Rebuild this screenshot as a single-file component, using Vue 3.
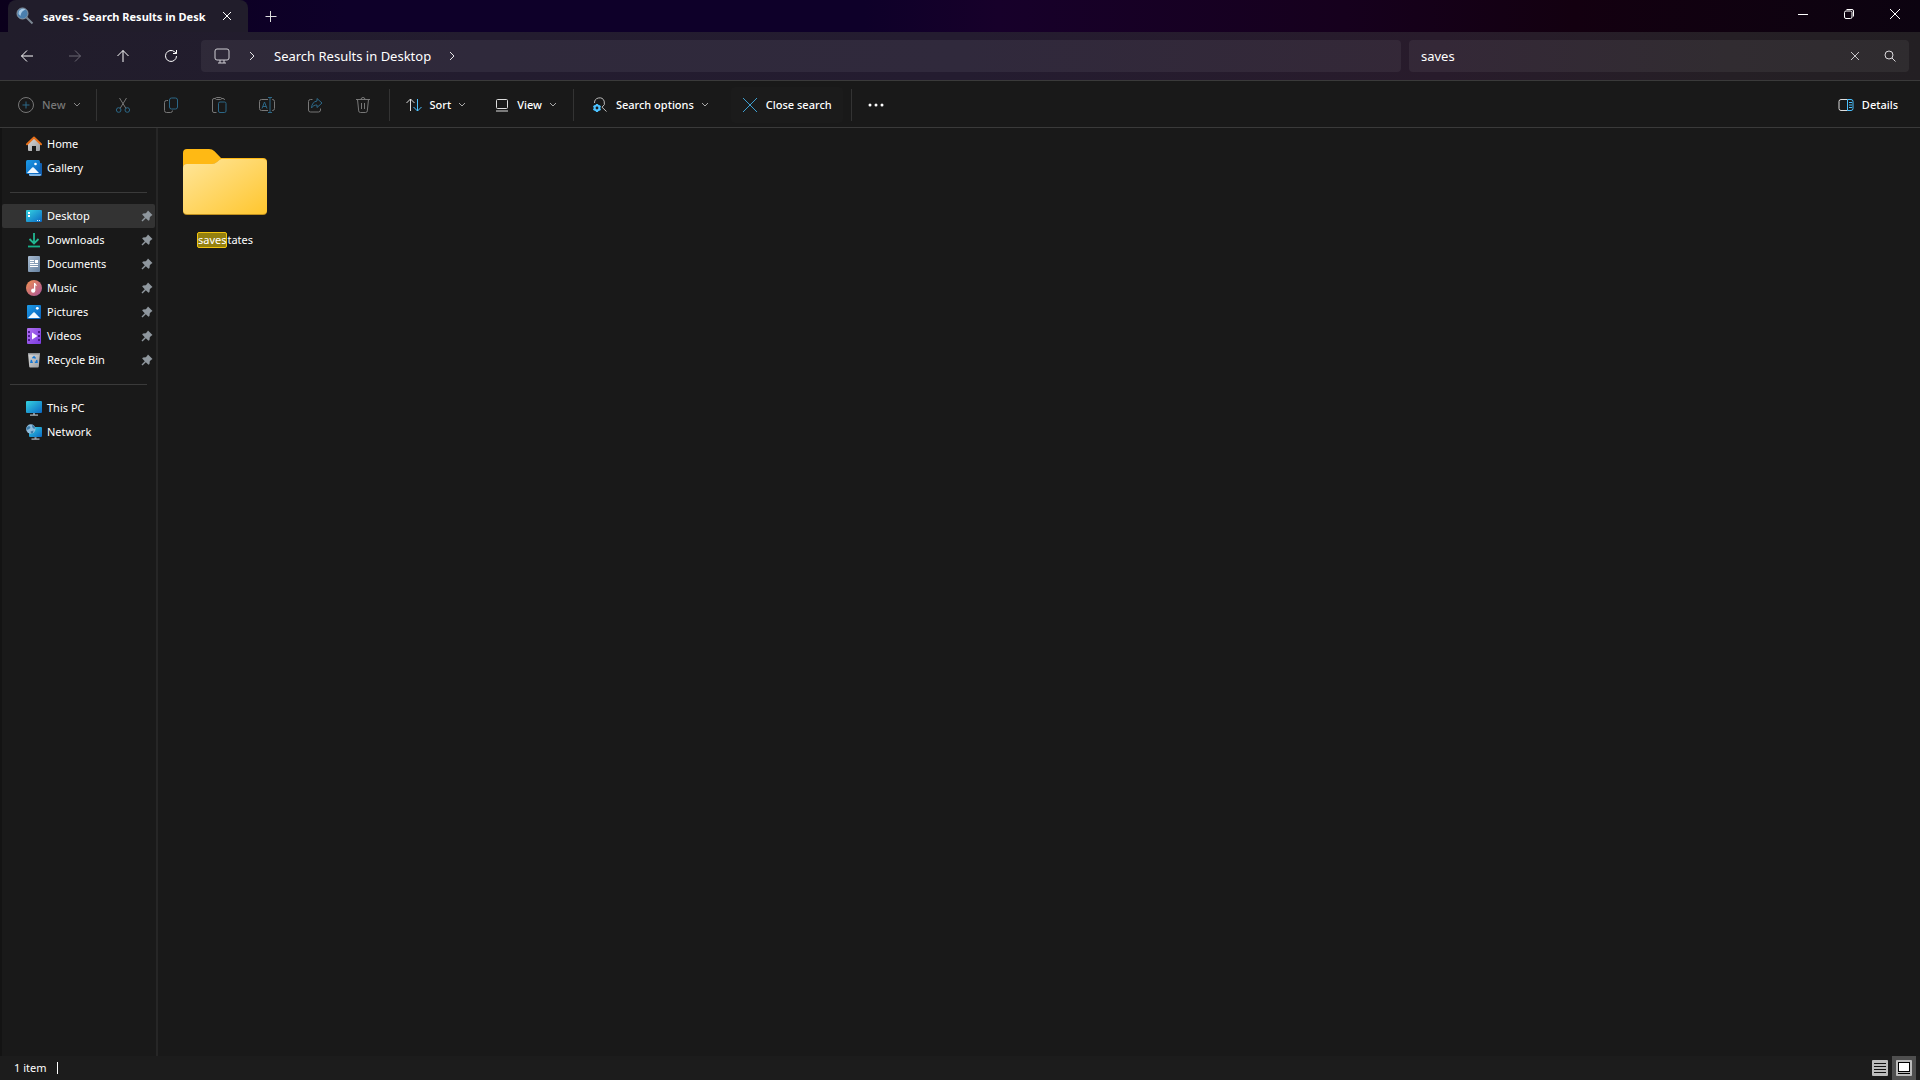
<script setup>
import { ref } from 'vue'

const query = ref('saves')
const selected = ref('Desktop')
const viewMode = ref('icons')

const navGroups = [
  {
    label: 'Start',
    items: [
      { name: 'Home', icon: 'home' },
      { name: 'Gallery', icon: 'gallery' }
    ]
  },
  {
    label: 'Quick access',
    items: [
      { name: 'Desktop', icon: 'desktop', pinned: true },
      { name: 'Downloads', icon: 'downloads', pinned: true },
      { name: 'Documents', icon: 'documents', pinned: true },
      { name: 'Music', icon: 'music', pinned: true },
      { name: 'Pictures', icon: 'pictures', pinned: true },
      { name: 'Videos', icon: 'videos', pinned: true },
      { name: 'Recycle Bin', icon: 'recycle', pinned: true }
    ]
  },
  {
    label: 'Devices',
    items: [
      { name: 'This PC', icon: 'pc' },
      { name: 'Network', icon: 'network' }
    ]
  }
]

const navIcons = {
  home: '<path d="M2 7.500 8 2l6 5.500V14a1 1 0 0 1-1 1h-3v-5H6v5H3a1 1 0 0 1-1-1z" fill="url(#gGrey)"/><path d="M1 8.200 8 1.600l7 6.600" fill="none" stroke="#e8701a" stroke-width="2" stroke-linecap="round" stroke-linejoin="round"/>',
  gallery: '<path d="M3 13h11V3h1a1 1 0 0 1 1 1v10.500a1.500 1.500 0 0 1-1.500 1.500H4a1 1 0 0 1-1-1z" fill="#1260b0"/><path d="M3 14h12v1l-1 1H4l-1-1z" fill="#7db4e6"/><rect width="14" height="14" rx="1.500" fill="url(#gBlue)"/><path d="M1 13 6.200 7.600a1 1 0 0 1 1.500 0L13 13z" fill="#f2f9ff"/><circle cx="9.500" cy="4" r="1.300" fill="#fff"/>',
  desktop: '<rect y="2" width="16" height="12" rx="1" fill="url(#gTeal)"/><path d="M2 4h2v2H2zM2 7h2v2H2z" fill="#fff"/><path d="M11 12h1v1h-1zM13 12h1v1h-1z" fill="#d6f2ff"/>',
  downloads: '<path d="M8 1v10M3.500 7 8 11.500 12.500 7" fill="none" stroke="#22b892" stroke-width="1.800"/><path d="M2 14.500h12" stroke="#17b08a" stroke-width="1.800"/>',
  documents: '<rect x="2" width="12" height="16" rx="1" fill="url(#gSlate)"/><path d="M4 4.500h4M4 6.500h4M4 8.500h8M4 10.500h8" stroke="#fff" stroke-width="1"/><path d="M9 4h3v3H9z" fill="#fff"/>',
  music: '<circle cx="8" cy="8" r="8" fill="url(#gMusic)"/><path d="M8 3h1.200c.2 1.400 1.800 1.600 1.800 3.200-.6-.6-1.200-.7-1.700-.7V10.500H8z" fill="#fff"/><circle cx="7.200" cy="10.700" r="2.100" fill="#fff"/>',
  pictures: '<rect x="1" y="1" width="14" height="14" rx="1" fill="url(#gBlue)"/><path d="M2 14 7.300 8.600a1 1 0 0 1 1.400 0L14 14z" fill="#f2f9ff"/><circle cx="11.300" cy="4.300" r="1.400" fill="#fff"/>',
  videos: '<rect x="1" width="14" height="16" rx="1" fill="url(#gPurple)"/><path d="M2 3h2v2H2zM2 7h2v2H2zM2 11h2v2H2zM12 3h2v2h-2zM12 7h2v2h-2zM12 11h2v2h-2z" fill="#4d1c8c"/><path d="M6 4.500 11.500 8 6 11.500z" fill="#fff"/>',
  recycle: '<path d="M2 1h12l-1.200 13.500a1 1 0 0 1-1 1H4.200a1 1 0 0 1-1-1z" fill="url(#gGrey)"/><path d="M2 1h12v1.500H2z" fill="#8e9296"/><path d="M6.500 6.200 8 4.800l1.500 1.800M10.600 8l.4 2.200H8.800M6.800 10.200H5L5.500 7.800" fill="none" stroke="#1477d4" stroke-width="1.500"/>',
  pc: '<rect y="1" width="16" height="12" rx="1" fill="url(#gTeal)"/><path d="M7 13h2v2H7z" fill="#7e8b96"/><path d="M4 14.500h8v1.200H4z" fill="#b5bfc8"/>',
  network: '<rect x="3" y="3" width="13" height="10" rx="1" fill="url(#gTeal)"/><path d="M8.500 13h2v2h-2z" fill="#7e8b96"/><path d="M5.500 14.500h8v1.200h-8z" fill="#b5bfc8"/><circle cx="4.800" cy="5" r="4.700" fill="#8fbcdc"/><path d="M2 2.500c2-1 3 .5 2 1.800S1.500 6 .6 5.500C.5 4 1.200 3 2 2.500zM6 1c1.800.4 2.800 1.800 3.200 3.500C7.500 5 6 4.200 6 1zM4.500 7.500 7.500 6.500 7 9 5 9.500z" fill="#3b7caa"/>'
}

const fileActions = [
  { name: 'Cut', svg: '<path d="M4.500 1 11 11.500M11.500 1 5 11.500" stroke="#777"/><circle cx="3.700" cy="13" r="2.300" stroke="#2c6888"/><circle cx="12.300" cy="13" r="2.300" stroke="#2c6888"/>' },
  { name: 'Copy', svg: '<path d="M5 3.500H3.500a2 2 0 0 0-2 2v8a2 2 0 0 0 2 2h4a2 2 0 0 0 2-2" stroke="#777"/><rect x="6.500" y="1" width="8" height="11" rx="2" stroke="#2c6888"/>' },
  { name: 'Paste', svg: '<path d="M4.500 1.500H3a1.500 1.500 0 0 0-1.500 1.500v11A1.500 1.500 0 0 0 3 15.500h2.500M10.500 1.500H12a1.500 1.500 0 0 1 1.500 1.500" stroke="#777"/><rect x="4.500" y=".5" width="6" height="2" rx="1" stroke="#777"/><rect x="7.500" y="5" width="7.500" height="10.500" rx="1.500" stroke="#2c6888"/>' },
  { name: 'Rename', svg: '<path d="M9 2.500H2.500a2 2 0 0 0-2 2v7a2 2 0 0 0 2 2H9M13 2.500h.5a2 2 0 0 1 2 2v7a2 2 0 0 1-2 2H13" stroke="#777"/><path d="M3 11.500 5.500 5 8 11.500M4 9.500h3M11 .5v15M9 .5h4M9 15.500h4" stroke="#2c6888"/>' },
  { name: 'Share', svg: '<path d="M5.500 2.500h-2a2 2 0 0 0-2 2v8.500a2 2 0 0 0 2 2h8a2 2 0 0 0 2-2v-1.500" stroke="#777"/><path d="M10 1.500 15 6l-5 4.500V8C7.500 8 6 8.700 4.500 11c.2-4 2.200-6.500 5.500-7z" stroke="#2c6888" stroke-linejoin="round"/>' },
  { name: 'Delete', svg: '<path d="M1 2.500h14M6 2.500a2 2 0 0 1 4 0M2.500 2.500l1.200 11.400a1.700 1.700 0 0 0 1.700 1.600h5.200a1.700 1.700 0 0 0 1.700-1.600l1.200-11.400M6.500 6v6M9.500 6v6" stroke="#777"/>' }
]

const clearQuery = () => {
  query.value = ''
}
</script>

<template>
  <div class="explorer">
    <svg class="defs" aria-hidden="true">
      <defs>
        <linearGradient id="gGrey" x1="0" y1="0" x2="1" y2="1"><stop offset="0" stop-color="#d9d9d9" /><stop offset="1" stop-color="#9a9da0" /></linearGradient>
        <linearGradient id="gBlue" x1="0" y1="0" x2="1" y2="1"><stop offset="0" stop-color="#1c9be8" /><stop offset="1" stop-color="#0a5fb8" /></linearGradient>
        <linearGradient id="gTeal" x1="0" y1="0" x2="1" y2="1"><stop offset="0" stop-color="#35d3e0" /><stop offset="1" stop-color="#0b68c4" /></linearGradient>
        <linearGradient id="gSlate" x1="0" y1="0" x2="1" y2="1"><stop offset="0" stop-color="#a9bcd0" /><stop offset="1" stop-color="#64809f" /></linearGradient>
        <linearGradient id="gMusic" x1="0" y1="0" x2="1" y2="1"><stop offset="0" stop-color="#f09050" /><stop offset="1" stop-color="#a9539a" /></linearGradient>
        <linearGradient id="gPurple" x1="0" y1="0" x2="1" y2="1"><stop offset="0" stop-color="#b070f0" /><stop offset="1" stop-color="#7a3be0" /></linearGradient>
      </defs>
    </svg>

    <header class="titlebar">
      <div class="tab">
        <svg class="tab-icon" width="18" height="18" viewBox="0 0 18 18">
          <path d="M10.500 10.500 16.500 16.500" stroke="#7c8894" stroke-width="2" />
          <circle cx="6.500" cy="6.500" r="5.500" fill="#4a7fae" stroke="#8d9aa6" />
          <path d="M2.500 7a4.500 4.500 0 0 1 7-4.300C7 3.500 5 5 4.500 9z" fill="#a9cbe6" />
        </svg>
        <span class="tab-title">saves - Search Results in Desk</span>
        <button class="tab-close" aria-label="Close tab">
          <svg width="10" height="10" viewBox="0 0 10 10"><path d="M1 1l8 8M9 1 1 9" stroke="#fff" /></svg>
        </button>
      </div>
      <button class="new-tab" aria-label="New tab">
        <svg width="12" height="12" viewBox="0 0 12 12"><path d="M.5 6.500h11M5.500 1v11" stroke="#ddd" /></svg>
      </button>
      <div class="window-controls">
        <button aria-label="Minimize">
          <svg width="12" height="12" viewBox="0 0 12 12"><path d="M1 6.500h10" stroke="#fff" /></svg>
        </button>
        <button aria-label="Restore">
          <svg width="12" height="12" viewBox="0 0 12 12" fill="none" stroke="#fff"><rect x="1.500" y="3" width="7.500" height="7.500" rx="1.500" /><path d="M3.500 1.500H9A1.500 1.500 0 0 1 10.500 3v5.500" /></svg>
        </button>
        <button aria-label="Close">
          <svg width="12" height="12" viewBox="0 0 12 12"><path d="M1 1l10 10M11 1 1 11" stroke="#fff" /></svg>
        </button>
      </div>
    </header>

    <div class="addressbar">
      <div class="history">
        <button aria-label="Back">
          <svg width="14" height="14" viewBox="0 0 14 14" fill="none" stroke="#fff"><path d="M13 7H1.500M7 1.500 1.500 7 7 12.500" /></svg>
        </button>
        <button aria-label="Forward" disabled>
          <svg width="14" height="14" viewBox="0 0 14 14" fill="none" stroke="#6b6873"><path d="M1 7h11.500M7 1.500 12.500 7 7 12.500" /></svg>
        </button>
        <button aria-label="Up">
          <svg width="14" height="14" viewBox="0 0 14 14" fill="none" stroke="#fff"><path d="M7 13V1.500M1.500 7 7 1.500 12.500 7" /></svg>
        </button>
        <button aria-label="Refresh">
          <svg width="14" height="14" viewBox="0 0 14 14" fill="none" stroke="#fff"><path d="M12.500 7A5.500 5.500 0 1 1 10.600 2.800L12.500 4.500M12.500 1v3.500H9" /></svg>
        </button>
      </div>
      <nav class="crumbs" aria-label="Address">
        <button class="crumb-root" aria-label="This PC">
          <svg width="16" height="16" viewBox="0 0 16 16" fill="none" stroke="#d0ced4"><rect x="1" y="1" width="14" height="11" rx="2" /><path d="M6 12v3M10 12v3M4 15h8" /></svg>
        </button>
        <svg class="crumb-arrow" width="8" height="10" viewBox="0 0 8 10" fill="none" stroke="#e6e6e6"><path d="M2 1l4 4-4 4" /></svg>
        <button class="crumb">Search Results in Desktop</button>
        <svg class="crumb-arrow" width="8" height="10" viewBox="0 0 8 10" fill="none" stroke="#e6e6e6"><path d="M2 1l4 4-4 4" /></svg>
      </nav>
      <div class="search">
        <input v-model="query" type="text" aria-label="Search" />
        <button aria-label="Clear" @click="clearQuery">
          <svg width="10" height="10" viewBox="0 0 10 10"><path d="M1 1l8 8M9 1 1 9" stroke="#c8c6ca" /></svg>
        </button>
        <button aria-label="Run search">
          <svg width="12" height="12" viewBox="0 0 12 12" fill="none" stroke="#dcdadd"><circle cx="5" cy="5" r="4" /><path d="M8 8l3.500 3.500" /></svg>
        </button>
      </div>
    </div>

    <div class="toolbar">
      <button class="tool tool-new" disabled>
        <svg width="16" height="16" viewBox="0 0 16 16" fill="none"><circle cx="8" cy="8" r="7.500" stroke="#777" /><path d="M4.500 8h7M8 4.500v7" stroke="#2c6888" /></svg>
        New
        <svg class="chevron" width="8" height="6" viewBox="0 0 8 6" fill="none" stroke="#888"><path d="M1 1l3 3 3-3" /></svg>
      </button>
      <span class="divider"></span>
      <div class="file-actions">
        <button v-for="action in fileActions" :key="action.name" :aria-label="action.name" disabled>
          <svg width="16" height="16" viewBox="0 0 16 16" fill="none" v-html="action.svg"></svg>
        </button>
      </div>
      <span class="divider"></span>
      <button class="tool tool-sort">
        <svg width="16" height="16" viewBox="0 0 16 16" fill="none"><path d="M4.500 14V2M.5 6l4-4 4 4" stroke="#ddd" /><path d="M11.500 2v12M7.500 10l4 4 4-4" stroke="#4cc2ff" /></svg>
        Sort
        <svg class="chevron" width="8" height="6" viewBox="0 0 8 6" fill="none" stroke="#aaa"><path d="M1 1l3 3 3-3" /></svg>
      </button>
      <button class="tool tool-view">
        <svg width="14" height="14" viewBox="0 0 14 14" fill="none" stroke="#ddd"><rect x="1.500" y="1.500" width="11" height="9" rx="1" /><path d="M1 13h12" /></svg>
        View
        <svg class="chevron" width="8" height="6" viewBox="0 0 8 6" fill="none" stroke="#aaa"><path d="M1 1l3 3 3-3" /></svg>
      </button>
      <span class="divider"></span>
      <button class="tool tool-options">
        <svg width="16" height="16" viewBox="0 0 16 16" fill="none">
          <path d="M2.500 6A5 5 0 1 1 10 10.200L14.500 14.500" stroke="#bbb" />
          <circle cx="5" cy="11" r="2.400" stroke="#4cc2ff" stroke-width="2" />
          <path d="M5 7v1.500M5 13.500V15M1.500 9l1.300.8M7.200 12.200l1.300.8M1.500 13l1.300-.8M7.200 9.800 8.500 9" stroke="#4cc2ff" stroke-width="2" />
        </svg>
        Search options
        <svg class="chevron" width="8" height="6" viewBox="0 0 8 6" fill="none" stroke="#aaa"><path d="M1 1l3 3 3-3" /></svg>
      </button>
      <button class="tool tool-close">
        <svg width="16" height="16" viewBox="0 0 16 16"><path d="M1 1l14 14M15 1 1 15" stroke="#3f9fd0" /></svg>
        Close search
      </button>
      <span class="divider"></span>
      <button class="tool tool-more" aria-label="See more">
        <svg width="16" height="4" viewBox="0 0 16 4" fill="#fff"><circle cx="2" cy="2" r="1.500" /><circle cx="8" cy="2" r="1.500" /><circle cx="14" cy="2" r="1.500" /></svg>
      </button>
      <button class="tool tool-details">
        <svg width="16" height="14" viewBox="0 0 16 14" fill="none"><path d="M9.500 1.500H3a2 2 0 0 0-2 2v7a2 2 0 0 0 2 2h6.500" stroke="#ddd" /><path d="M9.500 1.500H13a2 2 0 0 1 2 2v7a2 2 0 0 1-2 2H9.500zM11 4.500h3M11 7h3M11 9.500h3" stroke="#4cc2ff" /></svg>
        Details
      </button>
    </div>

    <div class="body">
      <nav class="sidebar" aria-label="Folders">
        <ul v-for="group in navGroups" :key="group.label" :aria-label="group.label">
          <li v-for="item in group.items" :key="item.name">
            <a href="#" :class="{ active: selected === item.name }" @click.prevent="selected = item.name">
              <svg width="16" height="16" viewBox="0 0 16 16" v-html="navIcons[item.icon]"></svg>
              <span>{{ item.name }}</span>
              <svg v-if="item.pinned" class="pin" width="12" height="12" viewBox="0 0 12 12">
                <path d="M7 .5 11.500 5 10 6 8.800 7.200 8.500 10 7.500 10.800 4.800 8.200 1.500 11.500.5 10.500 3.800 7.200 1.200 4.500 2 3.500 4.800 3.200 6 2z" fill="#8f979e" />
              </svg>
            </a>
          </li>
        </ul>
      </nav>

      <main class="content">
        <a href="#" class="file" @click.prevent>
          <svg width="84" height="67" viewBox="0 0 84 67">
            <defs>
              <linearGradient id="gFolder" x1="0" y1="0" x2="1" y2="1"><stop offset="0" stop-color="#ffe69b" /><stop offset="1" stop-color="#ffc62e" /></linearGradient>
            </defs>
            <path d="M0 4a4 4 0 0 1 4-4h22a8 8 0 0 1 5.500 2.200L38 9h42a4 4 0 0 1 4 4v30H0z" fill="#ffb914" />
            <path d="M0 19a4 4 0 0 1 4-4h25a8 8 0 0 0 5-2l3-2.500A6 6 0 0 1 41 10h39a4 4 0 0 1 4 4v48a4 4 0 0 1-4 4H4a4 4 0 0 1-4-4z" fill="#c0901f" />
            <path d="M0 19a4 4 0 0 1 4-4h25a8 8 0 0 0 5-2l3-2.500A6 6 0 0 1 41 10h39a4 4 0 0 1 4 4v47a4 4 0 0 1-4 4H4a4 4 0 0 1-4-4z" fill="url(#gFolder)" />
          </svg>
          <span class="file-name"><mark>saves</mark>tates</span>
        </a>
      </main>
    </div>

    <footer class="statusbar">
      <span class="count">1 item</span>
      <span class="caret"></span>
      <div class="view-switch">
        <button aria-label="Details view" :class="{ on: viewMode === 'details' }" @click="viewMode = 'details'">
          <svg width="16" height="16" viewBox="0 0 16 16"><rect width="16" height="16" rx="1" fill="#bcbcbc" /><path d="M2 3.500h12M2 6.500h12M2 9.500h12M2 12.500h12" stroke="#111" /></svg>
        </button>
        <button aria-label="Large icons view" :class="{ on: viewMode === 'icons' }" @click="viewMode = 'icons'">
          <svg width="16" height="16" viewBox="0 0 16 16"><rect width="16" height="16" rx="1" fill="#bcbcbc" /><rect x="2.500" y="2.500" width="11" height="9" fill="#fff" stroke="#000" /><path d="M2 13.500h12" stroke="#000" /></svg>
        </button>
      </div>
    </footer>
  </div>
</template>

<style>
body {
  background: #191919;
}
</style>

<style scoped>
.explorer {
  display: flex;
  flex-direction: column;
  min-height: 100vh;
  background: #191919;
  color: #fff;
  font-family: "Noto Sans", "Open Sans", sans-serif;
  font-size: 11px;
  line-height: 16px;
}

.defs {
  position: absolute;
  width: 0;
  height: 0;
}

svg {
  display: block;
  flex-shrink: 0;
}

button {
  display: flex;
  align-items: center;
  justify-content: center;
  padding: 0;
  border: none;
  background: none;
  color: inherit;
  font: inherit;
}

/* title bar */
.titlebar {
  display: flex;
  height: 32px;
  padding: 0 2px 0 8px;
  background: linear-gradient(90deg, #0b001c 0%, #0e0029 18%, #0e0029 45%, #17002a 52%, #16001d 70%, #130010 82%, #0c0310 100%);
}

.tab {
  display: flex;
  align-items: center;
  width: 240px;
  box-sizing: border-box;
  padding: 0 13px 0 8px;
  border-radius: 8px 8px 0 0;
  background: #211d2b;
}

.tab-title {
  flex: 1;
  margin: 2px 0 0 9px;
  white-space: nowrap;
  font-weight: 700;
}

.tab-close {
  width: 16px;
  height: 32px;
}

.new-tab {
  width: 46px;
}

.window-controls {
  display: flex;
  margin-left: auto;
}

.window-controls button {
  width: 46px;
  height: 28px;
}

.window-controls button:hover {
  background: #2b2233;
}

/* address bar */
.addressbar {
  display: flex;
  height: 48px;
  box-sizing: border-box;
  padding: 8px 11px 8px 3px;
  background: linear-gradient(90deg, #211d2b 0%, #231c2f 25%, #241c30 50%, #281b2b 75%, #251f25 90%, #231f23 100%);
}

.history {
  display: flex;
  margin-right: 6px;
}

.history button {
  width: 48px;
}

.crumbs {
  display: flex;
  flex: 12;
  align-items: center;
  border-radius: 4px;
  background: rgba(255, 255, 255, 0.06);
  font-size: 13px;
}

.crumb-root {
  width: 18px;
  margin-left: 12px;
}

.crumb-arrow {
  margin: 0 18px 0 17px;
}

.search {
  display: flex;
  flex: 5;
  margin-left: 8px;
  border-radius: 4px;
  background: rgba(255, 255, 255, 0.06);
}

.search input {
  flex: 1;
  min-width: 0;
  padding: 0 12px;
  border: none;
  outline: none;
  background: none;
  color: #fff;
  font: inherit;
  font-size: 13px;
}

.search button {
  width: 35px;
}

.search button:last-child {
  margin-right: 2px;
}

/* command bar */
.toolbar {
  display: flex;
  align-items: center;
  height: 48px;
  box-sizing: border-box;
  padding-top: 2px;
  border-top: 1px solid #3a3a3a;
  border-bottom: 1px solid #3a3a3a;
  font-weight: 500;
}

.tool {
  gap: 8px;
  height: 36px;
  padding: 0 11px;
  white-space: nowrap;
}

.tool-new {
  padding-left: 18px;
  padding-right: 15px;
  color: #777;
}

.tool-sort {
  padding-left: 16px;
}

.tool-view {
  padding: 0 16px 0 18px;
}

.tool-options {
  padding: 0 22px 0 18px;
}

.tool-close {
  border-radius: 4px;
  background: #1b1b1b;
}

.tool-more {
  padding: 0 16px;
}

.tool-details {
  margin-left: auto;
  padding-right: 22px;
}

.tool-close + .divider {
  margin-left: 8px;
}

.chevron {
  margin-left: -1px;
}

.divider {
  width: 1px;
  height: 32px;
  background: #333;
}

.file-actions {
  display: flex;
  padding: 0 2px;
}

.file-actions button {
  width: 48px;
  height: 36px;
}

/* body */
.body {
  display: flex;
  flex: 1;
}

.sidebar {
  width: 158px;
  box-sizing: border-box;
  padding: 4px 1px 0 0;
  border-left: 2px solid #131313;
  border-right: 2px solid #262626;
}

.sidebar ul {
  margin: 0;
  padding: 0;
  list-style: none;
}

.sidebar ul + ul::before {
  content: '';
  display: block;
  height: 1px;
  margin: 12px 8px 11px 8px;
  background: #3a3a3a;
}

.sidebar a {
  display: flex;
  align-items: center;
  gap: 5px;
  height: 24px;
  padding: 0 2px 0 24px;
  color: #fff;
  text-decoration: none;
}

.sidebar a:hover {
  background: #2a2a2a;
}

.sidebar a.active {
  border-radius: 2px;
  background: #333;
}

.pin {
  margin-left: auto;
}

.content {
  flex: 1;
  padding: 21px 22px;
}

.file {
  display: flex;
  flex-direction: column;
  align-items: center;
  gap: 16px;
  width: 90px;
  color: #fff;
  text-decoration: none;
}

.file-name {
  line-height: 16px;
}

mark {
  display: inline-block;
  border: 1px solid #f2c40f;
  border-radius: 2px;
  background: #94800f;
  color: inherit;
  line-height: 14px;
}

/* status bar */
.statusbar {
  display: flex;
  align-items: center;
  height: 24px;
  padding: 0 4px 0 14px;
  background: #1c1c1c;
}

.caret {
  width: 1px;
  height: 12px;
  margin-left: 11px;
  background: #fff;
}

.view-switch {
  display: flex;
  margin-left: auto;
}

.view-switch button {
  width: 24px;
  height: 24px;
}

.view-switch button.on {
  background: #4f4f4f;
}
</style>
